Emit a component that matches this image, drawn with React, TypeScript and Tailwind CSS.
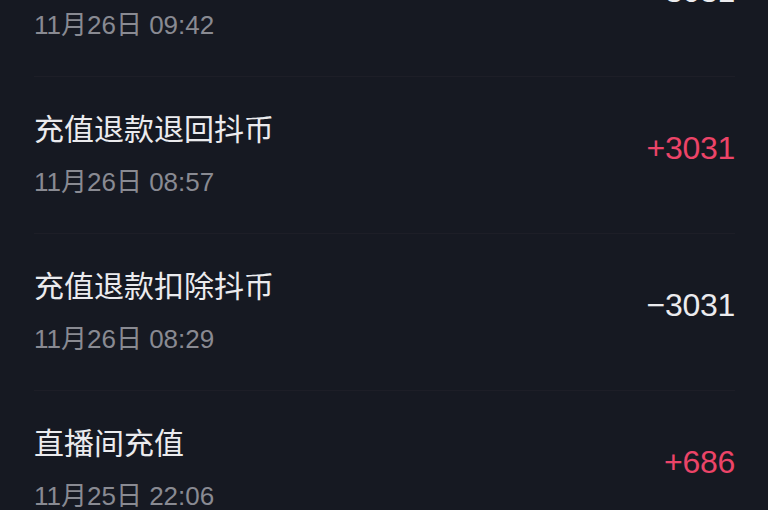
import React from 'react';

type Record = {
  title: string;
  time: string;
  amount: string;
  income: boolean;
};

const records: Record[] = [
  { title: '直播间消费', time: '11月26日 09:42', amount: '−3031', income: false },
  { title: '充值退款退回抖币', time: '11月26日 08:57', amount: '+3031', income: true },
  { title: '充值退款扣除抖币', time: '11月26日 08:29', amount: '−3031', income: false },
  { title: '直播间充值', time: '11月25日 22:06', amount: '+686', income: true },
];

const font = { fontFamily: '"Liberation Sans", "Noto Sans CJK SC", sans-serif' };

const RecordRow = ({ item }: { item: Record }) => (
  <div className="flex h-[157px] justify-between border-b border-[#1d1e27]">
    <div className="flex flex-col pt-[36px]">
      <span className="text-[30px] leading-[34px] text-[#ebebee]">{item.title}</span>
      <span className="mt-[20px] text-[26px] leading-[30px] text-[#898a92]">{item.time}</span>
    </div>
    <span
      className={`mt-[53px] self-start text-[32px] leading-[36px] tracking-[-0.3px] ${
        item.income ? 'text-[#ec4468]' : 'text-[#ebebee]'
      }`}
    >
      {item.amount}
    </span>
  </div>
);

const App = () => {
  return (
    <div className="h-[510px] w-[768px] overflow-hidden bg-[#161922]" style={font}>
      <div className="-mt-[80px] pl-[34px] pr-[33px]">
        {records.map((item) => (
          <RecordRow key={item.time} item={item} />
        ))}
      </div>
    </div>
  );
};

export default App;
